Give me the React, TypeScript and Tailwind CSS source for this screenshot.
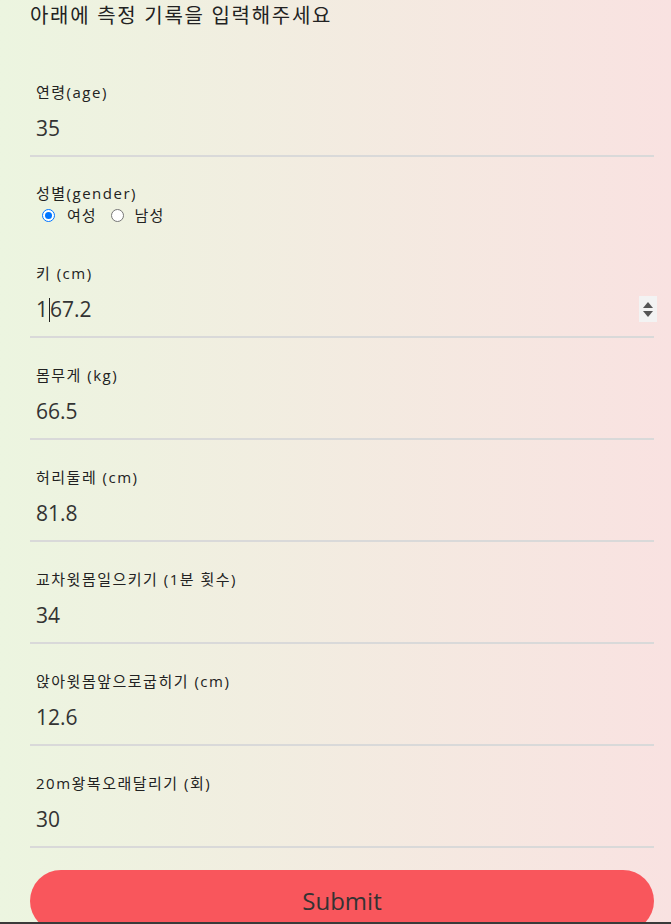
import React from "react";

const font = { fontFamily: '"Open Sans", "Noto Sans CJK KR", sans-serif' };

type FieldProps = { label: string; value: React.ReactNode; spinner?: boolean };

function Field({ label, value, spinner }: FieldProps) {
  return (
    <div className="pt-[27px] border-b-2 border-[#d9d9d9]">
      <div className="px-[6px] text-[15px] leading-[20px] tracking-[1.5px] text-[#222]">{label}</div>
      <div className="relative h-[53px] px-[6px] flex items-center text-[21px] text-[#333]">
        {value}
        {spinner && (
          <div className="absolute right-[-3px] top-[13px] w-[18px] h-[26px] bg-[#f3f3f3] flex flex-col items-center justify-center gap-[3px]">
            <svg width="10" height="6" viewBox="0 0 10 6">
              <path d="M5 0 L10 6 L0 6 Z" fill="#555" />
            </svg>
            <svg width="10" height="6" viewBox="0 0 10 6">
              <path d="M0 0 L10 0 L5 6 Z" fill="#555" />
            </svg>
          </div>
        )}
      </div>
    </div>
  );
}

function Radio({ checked, label, first }: { checked?: boolean; label: string; first?: boolean }) {
  return (
    <label className={`flex items-center ${first ? "ml-[12px]" : "ml-[14px]"}`}>
      {checked ? (
        <span className="w-[13px] h-[13px] rounded-full border-[1.5px] border-[#0075ff] bg-white flex items-center justify-center">
          <span className="w-[7px] h-[7px] rounded-full bg-[#0075ff]" />
        </span>
      ) : (
        <span className="w-[13px] h-[13px] rounded-full border border-[#767676] bg-white" />
      )}
      <span className={`tracking-[1px] ${checked ? "ml-[12px]" : "ml-[11px]"}`}>{label}</span>
    </label>
  );
}

export default function App() {
  return (
    <div
      className="min-h-[924px] w-full bg-gradient-to-r from-[#ecf5e0] to-[#f9e2e1] overflow-hidden relative"
      style={font}
    >
      <div className="ml-[30px] w-[624px]">
        <h1 className="text-[20px] leading-[32px] tracking-[1.7px] text-[#222] font-normal pb-[23px]">
          아래에 측정 기록을 입력해주세요
        </h1>

        <Field label="연령(age)" value="35" />

        <div className="pt-[26px] pb-[9px]">
          <div className="px-[6px] text-[15px] leading-[20px] tracking-[1.5px] text-[#222]">성별(gender)</div>
          <div className="flex items-center h-[24px] text-[15px] text-[#222]">
            <Radio checked first label="여성" />
            <Radio label="남성" />
          </div>
        </div>

        <Field
          label="키 (cm)"
          spinner
          value={
            <span className="flex items-center">
              1<span className="inline-block w-[1px] h-[24px] bg-[#222] mx-[0.5px]" />67.2
            </span>
          }
        />
        <Field label="몸무게 (kg)" value="66.5" />
        <Field label="허리둘레 (cm)" value="81.8" />
        <Field label="교차윗몸일으키기 (1분 횟수)" value="34" />
        <Field label="앉아윗몸앞으로굽히기 (cm)" value="12.6" />
        <Field label="20m왕복오래달리기 (회)" value="30" />

        <button className="mt-[22px] w-full h-[62px] rounded-[31px] bg-[#f9565c] text-[24px] text-[#333] flex items-center justify-center">
          Submit
        </button>
      </div>
      <div className="fixed bottom-0 left-0 right-0 h-[2px] bg-[#3a3a3a]" />
    </div>
  );
}
